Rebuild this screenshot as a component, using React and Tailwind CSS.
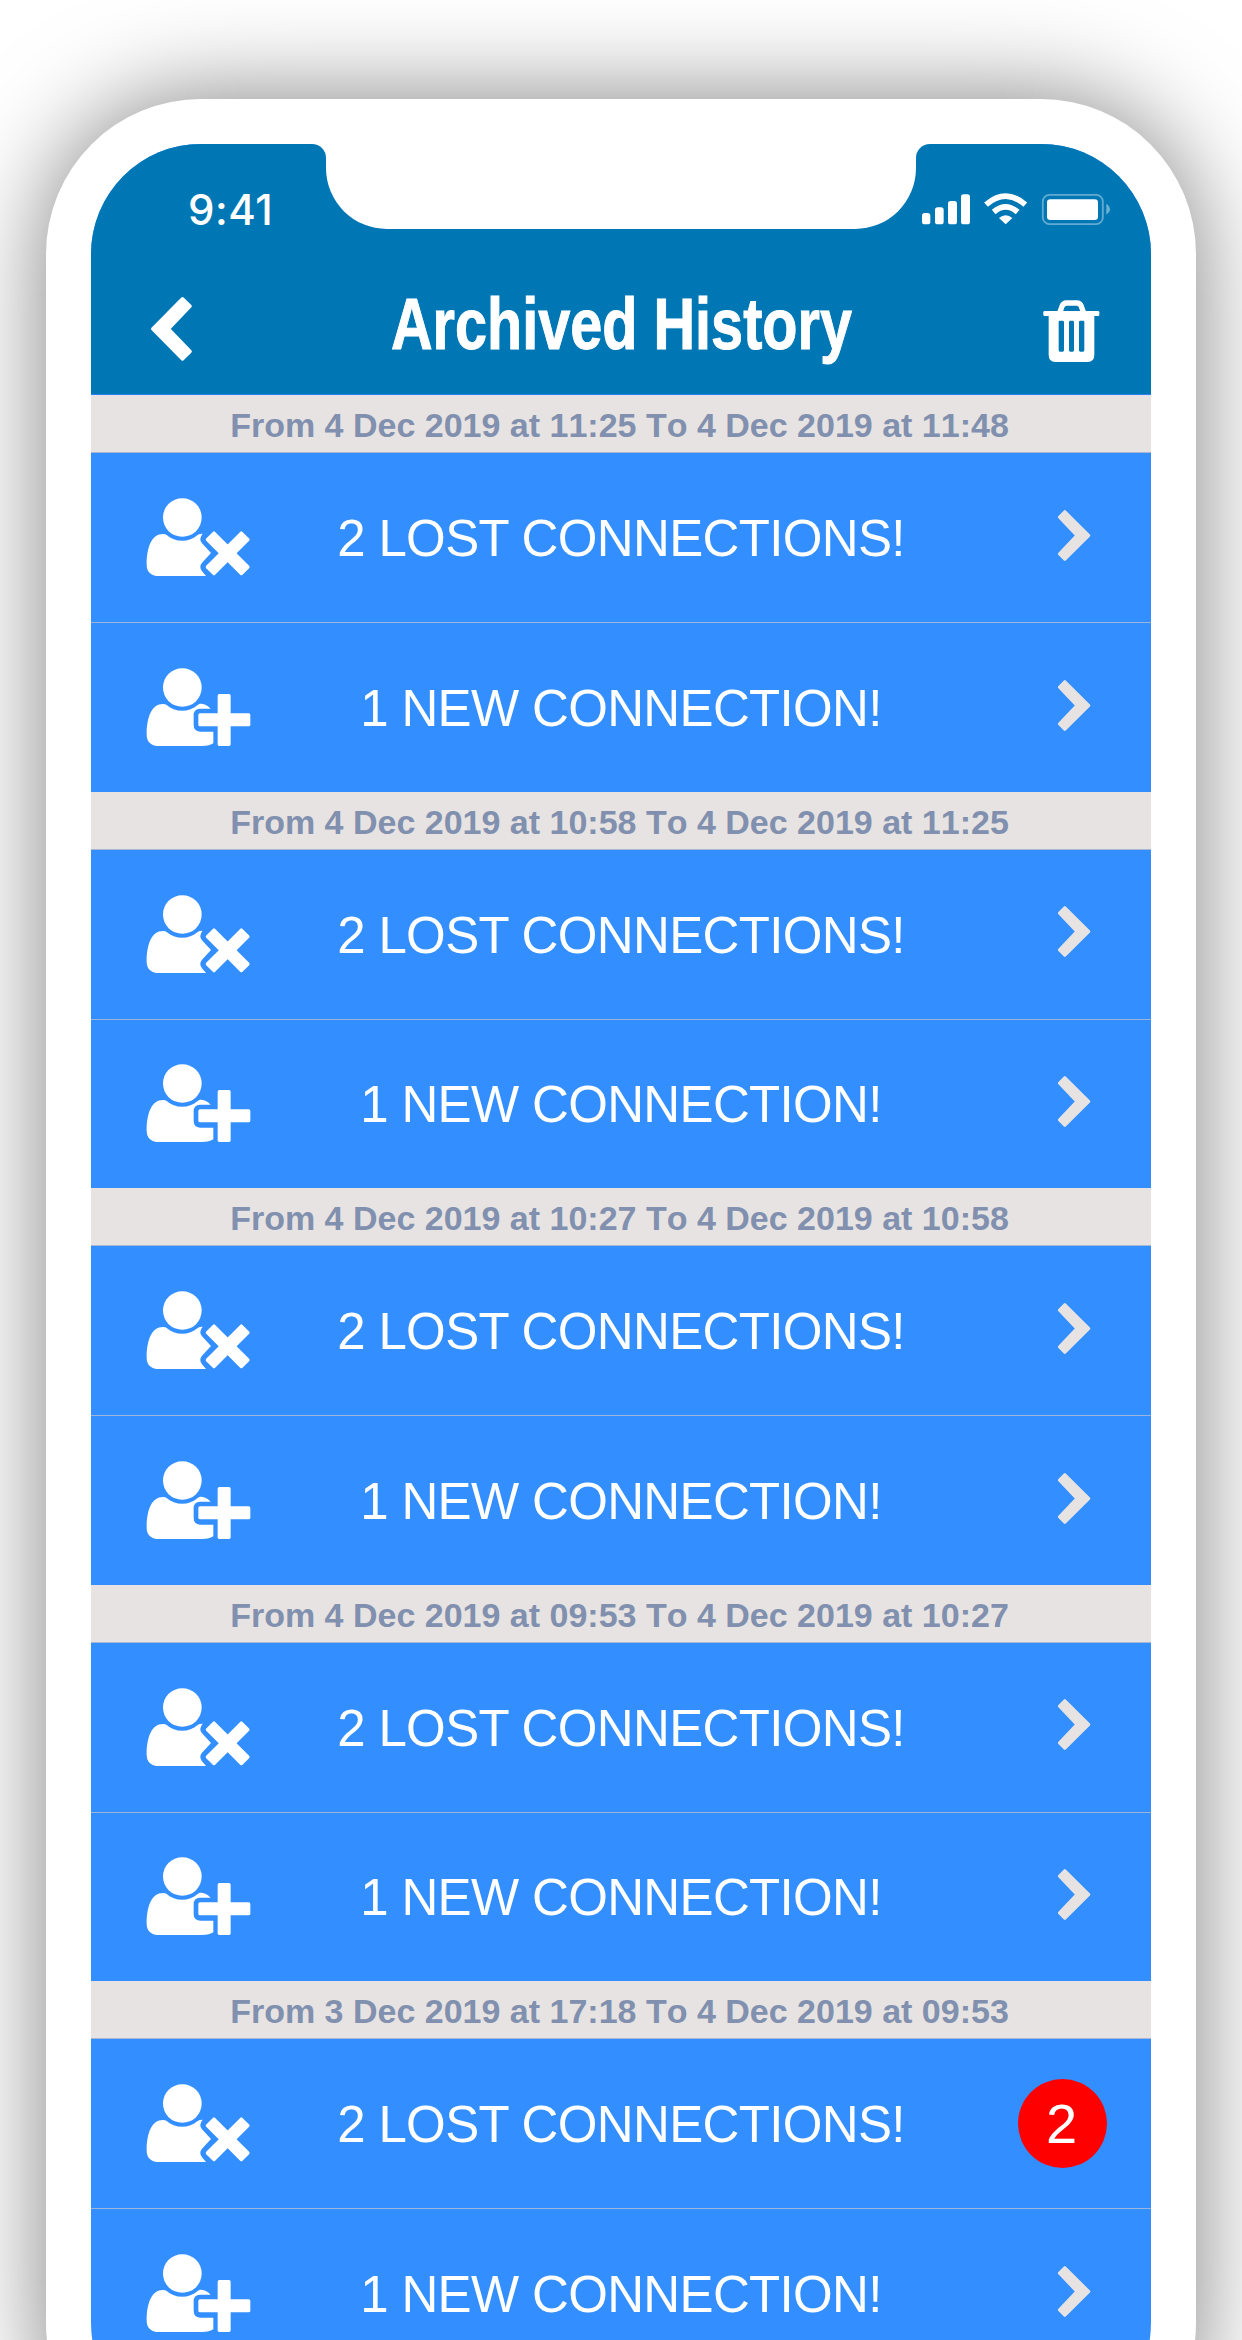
const SECTIONS = [
  { range: 'From 4 Dec 2019 at 11:25 To 4 Dec 2019 at 11:48', height: 'h-[397px]' },
  { range: 'From 4 Dec 2019 at 10:58 To 4 Dec 2019 at 11:25', height: 'h-[396px]' },
  { range: 'From 4 Dec 2019 at 10:27 To 4 Dec 2019 at 10:58', height: 'h-[397px]' },
  { range: 'From 4 Dec 2019 at 09:53 To 4 Dec 2019 at 10:27', height: 'h-[396px]' },
  { range: 'From 3 Dec 2019 at 17:18 To 4 Dec 2019 at 09:53', height: 'h-[397px]', badge: 2 },
];

function StatusIcons() {
  return (
    <svg viewBox="300 395 575 102" className="h-[34px] w-[191.67px]" fill="white">
      <rect x="306" y="458" width="25" height="34" rx="8" />
      <rect x="345" y="441" width="26" height="51" rx="8" />
      <rect x="384" y="422" width="27" height="70" rx="8" />
      <rect x="423" y="402" width="27" height="90" rx="8" />
      <path d="M557 492 L537 473 Q557 456 577 473 Z" />
      <path d="M521 455 Q557 424 593 455" fill="none" stroke="white" strokeWidth="17" />
      <path d="M498 433 Q557 382 616 433" fill="none" stroke="white" strokeWidth="17" />
      <rect x="668.5" y="403.5" width="180" height="88" rx="20" fill="none" stroke="white" strokeOpacity="0.38" strokeWidth="5.5" />
      <rect x="681" y="417" width="153" height="62" rx="10" />
      <path d="M859 430 Q870 438 870 447 Q870 456 859 463 Z" fillOpacity="0.42" />
    </svg>
  );
}

function BackIcon() {
  return (
    <svg viewBox="450 707 128 197" className="mt-[22px] ml-2 h-[65.67px] w-[42.67px]" fill="white" stroke="white" strokeWidth="10" strokeLinejoin="round">
      <path d="M458 805.500 L547.500 715 L570.500 737.500 L505.500 805.500 L570.500 873.500 L547.500 896 Z" />
    </svg>
  );
}

function TrashIcon() {
  return (
    <svg viewBox="668 720 170 187" className="mt-[26px] h-[62.33px] w-[56.67px]" fill="white">
      <path d="M719 756 L725 739 Q729 729 739 729 H769 Q779 729 783 739 L789 756" fill="none" stroke="white" strokeWidth="16" />
      <rect x="669" y="753" width="168" height="15" rx="4" />
      <path fillRule="evenodd" d="M685 762 H822 V884 Q822 906 802 906 H705 Q685 906 685 884 Z M719 782 Q715 782 715 786 V871 Q715 875 719 875 H727 Q731 875 731 871 V786 Q731 782 727 782 Z M750 782 Q746 782 746 786 V871 Q746 875 750 875 H757 Q761 875 761 871 V786 Q761 782 757 782 Z M780 782 Q776 782 776 786 V871 Q776 875 780 875 H788 Q792 875 792 871 V786 Q792 782 788 782 Z" />
    </svg>
  );
}

function Chevron() {
  return (
    <svg viewBox="231 86 102 159" className="mr-[60px] mb-[5px] h-[53px] w-[34px]" fill="#e7e3e2" stroke="#e7e3e2" strokeWidth="8" strokeLinejoin="round">
      <path d="M327 165.500 L254.500 93 L237.500 110.500 L290 165.500 L237.500 220.500 L254.500 238 Z" />
    </svg>
  );
}

function PersonIcon({ kind }) {
  return (
    <svg viewBox="78 82 316 240" className="mb-px ml-[55px] h-[80px] w-[105.33px]" fill="white">
      <circle cx="187" cy="143.500" r="58" />
      {kind === 'lost' ? (
        <>
          <path d="M129 193 C95 193 80 232 80 285 C80 308 95 319 118 319 H258 L246 305 Q236 291 246 279 L273 250 L246 221 Q235 208 248 192 Q238 192 233 196 C208 219 165 219 140 196 Q137 193 129 193 Z" />
          <g transform="rotate(45 323 251)">
            <rect x="246" y="232" width="154" height="38" rx="5" />
            <rect x="304" y="174" width="38" height="154" rx="5" />
          </g>
        </>
      ) : (
        <>
          <path d="M129 193 C95 193 80 232 80 285 C80 308 95 319 118 319 H245 C262 319 273 316 280 311 V276 H240 Q221 274 221 255 V227 Q221 207 240 207 H272 C262 195 250 192 240 192 Q237 193 233 196 C208 219 165 219 140 196 Q137 193 129 193 Z" />
          <rect x="235" y="221" width="156" height="39" rx="5" />
          <rect x="293" y="163" width="39" height="156" rx="5" />
        </>
      )}
    </svg>
  );
}

function Row({ kind, text, badge }) {
  return (
    <div className={'grid min-h-0 flex-1 grid-cols-[1fr_auto_1fr] items-center' + (kind === 'lost' ? ' border-b border-[#9db6d8]' : '')}>
      <PersonIcon kind={kind} />
      <span className="pt-[3px] text-[51px] leading-[56px] tracking-[-0.65px] whitespace-nowrap text-white">{text}</span>
      <div className="flex justify-end">
        {badge ? (
          <span className="mr-[44px] flex size-[89px] items-center justify-center rounded-full bg-[#ff0000] pr-[2px] text-[56px] leading-none text-white">
            {badge}
          </span>
        ) : (
          <Chevron />
        )}
      </div>
    </div>
  );
}

function Section({ range, height, badge }) {
  return (
    <section className={'flex shrink-0 flex-col ' + height}>
      <h2 className="flex h-[58px] shrink-0 items-center justify-center border-b border-[#a9b6d3] bg-[#e7e3e2] pt-[3px] pr-[3px] text-[34px] font-bold whitespace-nowrap text-[#8090ae] [font-kerning:none]">
        {range}
      </h2>
      <Row kind="lost" text="2 LOST CONNECTIONS!" badge={badge} />
      <Row kind="new" text="1 NEW CONNECTION!" />
    </section>
  );
}

function Notch() {
  return (
    <div className="absolute top-0 left-[221px] flex items-start">
      <div className="size-[14px] bg-white">
        <div className="size-full rounded-tr-[14px] bg-[#0077b5]" />
      </div>
      <div className="h-[85px] w-[590px] rounded-b-[61px] bg-white" />
      <div className="size-[14px] bg-white">
        <div className="size-full rounded-tl-[14px] bg-[#0077b5]" />
      </div>
    </div>
  );
}

export default function App() {
  return (
    <div className="flex h-[2340px] w-[1242px] items-start justify-center overflow-hidden bg-white pt-[99px] font-['Liberation_Sans',Arial,sans-serif]">
      <div className="h-[2379px] w-[1150px] shrink-0 rounded-[155px] bg-white p-[45px] shadow-[0_0_100px_rgba(0,0,0,0.5)]">
        <div className="relative flex h-[2289px] w-[1060px] flex-col overflow-hidden rounded-[110px] bg-[#338fff]">
          <header className="h-[251px] shrink-0 border-b border-[#2a80f0] bg-[#0077b5]">
            <div className="flex h-[130px] items-center justify-between pr-[39px] pl-[97px]">
              <span className="pt-px font-['Inter',sans-serif] text-[42px] font-medium tracking-[0.5px] text-white">9:41</span>
              <StatusIcons />
            </div>
            <div className="grid h-[120px] grid-cols-[1fr_auto_1fr] items-start px-[51px]">
              <BackIcon />
              <h1 className="w-[463px] pt-[2px] text-[72px] leading-[96px] font-bold text-white [-webkit-text-stroke:1px_white]">
                <span className="flex origin-center scale-x-[0.8] justify-center whitespace-nowrap">Archived History</span>
              </h1>
              <div className="flex justify-end">
                <TrashIcon />
              </div>
            </div>
          </header>
          {SECTIONS.map((s) => (
            <Section key={s.range} {...s} />
          ))}
          <Notch />
        </div>
      </div>
    </div>
  );
}
